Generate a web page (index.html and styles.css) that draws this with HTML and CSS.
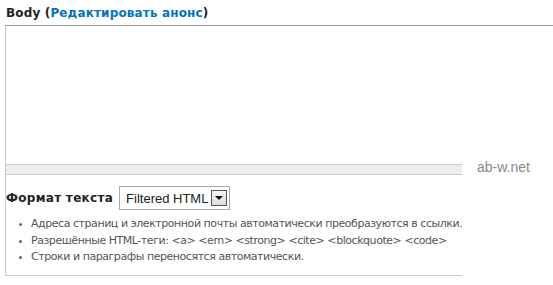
FILE: index.html
```html
<!DOCTYPE html>
<html lang="ru">
<head>
    <meta charset="UTF-8">
    <title>Body</title>
    <link rel="stylesheet" href="styles.css">
</head>
<body>
    <div class="form-item">
        <label class="field-label">Body (<a href="#">Редактировать анонс</a>)</label>
        <div class="resizable">
            <textarea class="body-text"></textarea>
            <div class="grippie"></div>
        </div>
        <div class="filter-wrapper">
            <div class="filter-selector">
                <span class="filter-label">Формат текста</span>
                <span class="fake-select">
                    <span class="fake-select-value">Filtered HTML</span>
                    <span class="fake-select-arrow"></span>
                </span>
            </div>
            <ul class="tips">
                <li>Адреса страниц и электронной почты автоматически преобразуются в ссылки.</li>
                <li>Разрешённые HTML-теги: &lt;a&gt; &lt;em&gt; &lt;strong&gt; &lt;cite&gt; &lt;blockquote&gt; &lt;code&gt;</li>
                <li>Строки и параграфы переносятся автоматически.</li>
            </ul>
        </div>
    </div>
    <div class="watermark">ab-w.net</div>
</body>
</html>
```

FILE: styles.css
```css
body {
    margin: 0;
    background-color: #fff;
    font-family: "DejaVu Sans", Verdana, sans-serif;
    color: #333;
    overflow: hidden;
}
.form-item {
    padding: 6px 0 0 5px;
}
.field-label {
    display: block;
    font-size: 12px;
    font-weight: bold;
    letter-spacing: 0.15px;
    color: #222;
    margin: 0 0 4px 1px;
    line-height: 15px;
}
.field-label a {
    color: #0074bd;
    text-decoration: none;
}
.resizable {
    width: 457px;
}
.body-text {
    display: block;
    width: 548px;
    height: 139px;
    margin: 0;
    padding: 0;
    border: 1px solid #ccc;
    border-top-color: #999;
    border-bottom: 0;
    border-right: 0;
    resize: none;
    box-sizing: border-box;
}
.grippie {
    height: 9px;
    background-color: #eee;
    border: 1px solid #ccc;
    border-right: 0;
}
.filter-wrapper {
    width: 457px;
    box-sizing: border-box;
    padding: 11px 0 9px 0;
    border-left: 1px solid #ccc;
    border-bottom: 1px solid #ccc;
    overflow: hidden;
}
.filter-selector {
    display: flex;
    align-items: center;
    gap: 6px;
}
.filter-label {
    font-size: 12px;
    font-weight: bold;
    letter-spacing: 0.3px;
    color: #222;
}
.fake-select {
    display: flex;
    align-items: center;
    justify-content: space-between;
    width: 111px;
    height: 24px;
    box-sizing: border-box;
    padding: 0 2px 0 6px;
    border: 1px solid #aaa;
    background-color: #fff;
}
.fake-select-value {
    font-family: "Liberation Sans", Arial, sans-serif;
    font-size: 13px;
    color: #222;
}
.fake-select-arrow {
    position: relative;
    width: 16px;
    height: 16px;
    box-sizing: border-box;
    border: 1px solid #555;
    background: linear-gradient(#f6f6f6, #dcdcdc);
}
.fake-select-arrow::after {
    content: "";
    position: absolute;
    left: 3px;
    top: 5px;
    border-left: 4px solid transparent;
    border-right: 4px solid transparent;
    border-top: 4px solid #111;
}
.tips {
    margin: 6px 0 0 0;
    padding: 0 0 0 25px;
    font-size: 11px;
    letter-spacing: -0.45px;
    line-height: 16.5px;
    color: #555;
    white-space: nowrap;
}
.tips li {
    list-style: disc;
}
.tips li::marker {
    color: #666;
    font-size: 9px;
}
.watermark {
    position: absolute;
    left: 477px;
    top: 159px;
    font-family: "Liberation Sans", Arial, sans-serif;
    font-size: 14px;
    color: #888;
}
```
